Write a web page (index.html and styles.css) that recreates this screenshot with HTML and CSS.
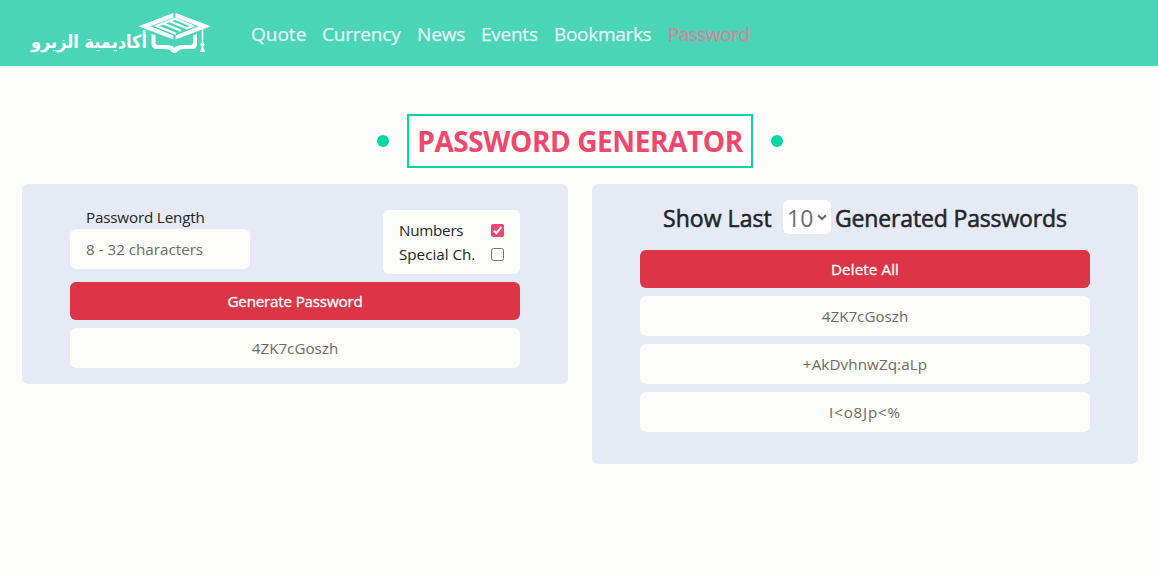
FILE: index.html
```html
<!DOCTYPE html>
<html lang="en">
<head>
<meta charset="utf-8">
<title>Password Generator</title>
<link rel="stylesheet" href="styles.css">
</head>
<body>
<nav class="navbar">
  <svg class="logo" viewBox="0 0 184 46" width="184" height="46" role="img">
    <text class="logo-text" x="118" y="38" textLength="116" lengthAdjust="spacingAndGlyphs" direction="rtl">أكاديمية الزيرو</text>
    <g transform="translate(-29 -10)" fill="#fff">
      <path d="M173.400 13L138.500 26.300L173.400 39.500V35.500L150.500 26.300L173.400 17.500Z"/>
      <path d="M175.600 13L210.800 26.300L175.600 39.500V35.500L198.500 26.300L175.600 17.500Z"/>
      <path d="M176 34L156.500 26.300L175 19L192.500 26.300L186 29M163 23.600L181 31M169 21.300L187 28.600" transform="translate(0 -.3)" fill="none" stroke="#fff" stroke-width="2.200"/>
      <path d="M151.500 34L155.500 35.500V42.500Q155.500 45 158.500 45H166Q172 45 174.500 47.800Q177 45 183 45H190Q193 45 193 42.500V35.500L197 34V44Q197 49 192 49H184Q180 49 178 51L176 53H173L171 51Q169 49 165 49H157Q151.500 49 151.500 44Z"/>
      <path d="M201.700 30L203.300 29V44H201.700Z"/>
      <circle cx="202.500" cy="44.500" r="2"/>
      <path d="M202 46H203L205 52H200Z"/>
    </g>
  </svg>
  <a class="link quote">Quote</a>
  <a class="link currency">Currency</a>
  <a class="link news">News</a>
  <a class="link events">Events</a>
  <a class="link bookmarks">Bookmarks</a>
  <a class="link password active">Password</a>
</nav>
<header class="heading">
  <i class="dot"></i>
  <h1 class="title"><span>PASSWORD GENERATOR</span></h1>
  <i class="dot"></i>
</header>
<main class="panels">
  <section class="panel generator">
    <div class="options">
      <div class="length">
        <label class="length-label">Password Length</label>
        <div class="length-input">8 - 32 characters</div>
      </div>
      <div class="checks">
        <label class="check"><span class="numbers">Numbers</span>
          <svg width="13" height="13" viewBox="0 0 13 13"><rect width="13" height="13" rx="2" fill="#ef476f"/><path d="M2.800 6.800L5.200 9.300L10.300 3.200" fill="none" stroke="#fff" stroke-width="2"/></svg>
        </label>
        <label class="check"><span class="special">Special Ch.</span>
          <svg width="13" height="13" viewBox="0 0 13 13"><rect x=".5" y=".5" width="12" height="12" rx="2" fill="#fff" stroke="#767676"/></svg>
        </label>
      </div>
    </div>
    <div class="button"><span class="t-generate">Generate Password</span></div>
    <div class="field"><span class="t-one">4ZK7cGoszh</span></div>
  </section>
  <section class="panel history">
    <h2 class="subtitle">
      <span class="t-show">Show Last</span>
      <span class="select"><span class="ten">10</span><svg width="10" height="7" viewBox="0 0 10 7"><path d="M1 1.200L5 5L9 1.200" fill="none" stroke="#666" stroke-width="2"/></svg></span>
      <span class="t-gen">Generated Passwords</span>
    </h2>
    <div class="button"><span class="t-delete">Delete All</span></div>
    <div class="field"><span class="t-one">4ZK7cGoszh</span></div>
    <div class="field"><span class="t-two">+AkDvhnwZq:aLp</span></div>
    <div class="field"><span class="t-three">I&lt;o8Jp&lt;%</span></div>
  </section>
</main>
</body>
</html>
```
FILE: styles.css
```css
* { box-sizing: border-box; }
body {
  margin: 0;
  min-height: 575px;
  background: #fcfdf8;
  color: #212529;
  font: 15.2px/24px "Open Sans", "Noto Sans", sans-serif;
}
.navbar {
  display: flex;
  align-items: center;
  height: 66px;
  padding-left: 29px;
  background: #4bd5b7;
}
.logo { flex: none; margin-right: 38px; }
.logo-text { font: bold 18px "DejaVu Sans", sans-serif; fill: #fff; }
.link {
  flex: none;
  margin-right: 16px;
  padding-top: 2px;
  font-size: 19px;
  line-height: 30px;
  color: #e5f5f3;
  white-space: nowrap;
  -webkit-text-stroke: .25px currentColor;
}
.quote { width: 55px; }
.currency { width: 79px; letter-spacing: -.2px; }
.news { width: 48px; letter-spacing: -.15px; }
.events { width: 57px; letter-spacing: -.25px; }
.bookmarks { width: 98px; letter-spacing: -.3px; }
.password { width: 83px; letter-spacing: -.5px; }
.active { color: #d6859c; }
.heading {
  display: flex;
  justify-content: center;
  align-items: center;
  gap: 18px;
  margin: 48px 0 16px 2px;
}
.dot { width: 12px; height: 12px; border-radius: 50%; background: #06d6a0; }
.title {
  display: flex;
  justify-content: center;
  width: 346px;
  height: 54px;
  margin: 0;
  border: 2px solid #06d6a0;
  font-size: 28px;
  line-height: 51px;
  font-weight: 700;
  color: #ef476f;
  white-space: nowrap;
}
.title span { letter-spacing: -.4px; }
.panels {
  display: flex;
  align-items: flex-start;
  gap: 24px;
  padding: 0 20px 0 22px;
}
.panel {
  flex: 1;
  display: flex;
  flex-direction: column;
  gap: 8px;
  padding: 16px 48px;
  border-radius: 6px;
  background: #e6eaf5;
}
.generator { padding-top: 26px; }
.history { padding-bottom: 32px; }
.options { display: flex; justify-content: space-between; height: 64px; }
.length { display: flex; flex-direction: column; margin-top: -5px; }
.length-label { padding-left: 16px; letter-spacing: -.17px; }
.length-input {
  width: 180px;
  height: 40px;
  padding: 8px 16px;
  border-radius: 6px;
  background: #fcfdf8;
  color: #6c6c6a;
  white-space: nowrap;
}
.checks { width: 137px; padding: 8px 16px; border-radius: 6px; background: #fcfdf8; }
.check { display: flex; justify-content: space-between; align-items: center; white-space: nowrap; }
.numbers { letter-spacing: -.25px; }
.button, .field { display: flex; justify-content: center; border-radius: 6px; white-space: nowrap; }
.button {
  height: 38px;
  padding: 7px;
  background: #dc3545;
  color: #fff;
  -webkit-text-stroke: .3px currentColor;
}
.t-generate { letter-spacing: -.2px; }
.t-delete { letter-spacing: .1px; }
.field { height: 40px; padding: 8px; background: #fcfdf8; color: #6c6c6a; }
.t-two { letter-spacing: .1px; }
.t-three { letter-spacing: .8px; }
.subtitle {
  display: flex;
  align-items: center;
  height: 34px;
  margin: 0 0 8px 23px;
  font-size: 23px;
  line-height: 34px;
  font-weight: 400;
  white-space: nowrap;
}
.t-show, .t-gen { padding-top: 2px; -webkit-text-stroke: .55px currentColor; }
.t-show { width: 120px; letter-spacing: .05px; }
.t-gen { letter-spacing: -.15px; }
.select {
  display: flex;
  align-items: center;
  width: 48px;
  height: 34px;
  margin-right: 4px;
  padding-left: 4px;
  gap: 4px;
  border-radius: 6px;
  background: #fff;
  color: #6c6c6a;
}
.ten { width: 26px; padding-top: 2px; }
```
